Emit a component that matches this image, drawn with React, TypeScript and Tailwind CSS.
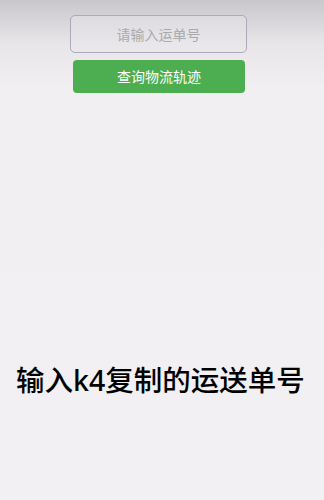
export default function App() {
  return (
    <div className="h-[500px] w-full flex flex-col bg-[linear-gradient(to_bottom,#c9c7cb_0px,#e9e6ea_45px,#f2eff2_90px,#f3f0f3_100%)] font-['Noto_Sans','Noto_Sans_CJK_SC',sans-serif]">
      <div className="mt-[15px] ml-[70px] w-[177px] h-[38px] border border-[#aba9ba] rounded-[5px] flex items-center justify-center text-[14px] text-[#aaaaaa] bg-[#ece9ed]/40">
        请输入运单号
      </div>
      <div className="mt-[7px] ml-[73px] w-[172px] h-[33px] bg-[#4cae50] rounded-[4px] flex items-center justify-center text-[14px] text-white">
        查询物流轨迹
      </div>
      <div className="mt-[273px] pl-[16px] text-[28.5px] leading-[28px] text-black font-medium whitespace-nowrap">
        输入k4复制的运送单号
      </div>
    </div>
  );
}
